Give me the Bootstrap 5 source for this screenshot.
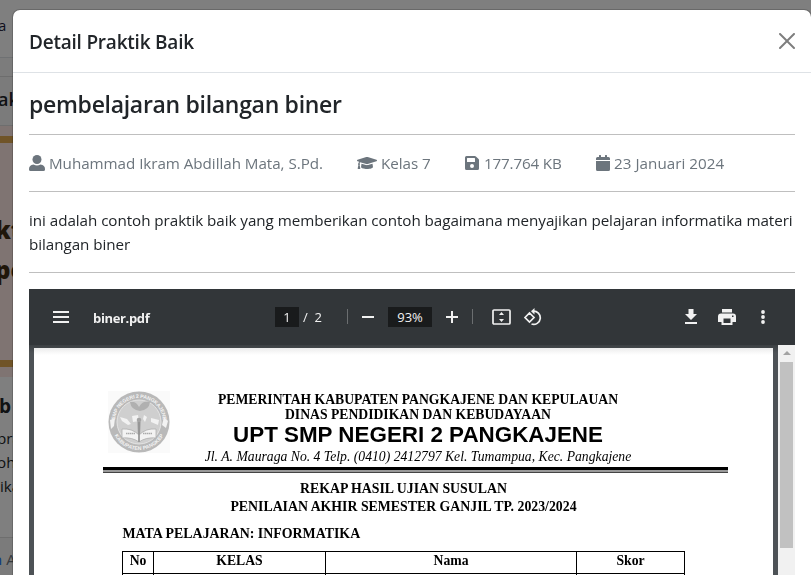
<!DOCTYPE html>
<html lang="id">
<head>
<meta charset="utf-8">
<meta name="viewport" content="width=device-width, initial-scale=1">
<title>Detail Praktik Baik</title>
<link href="https://cdn.jsdelivr.net/npm/bootstrap@5.3.0/dist/css/bootstrap.min.css" rel="stylesheet">
<style>
body{font-family:"Open Sans","Noto Sans",sans-serif;height:575px;overflow:hidden;background:#fff}
/* page behind the modal */
.backpage{height:575px;overflow:hidden;white-space:nowrap}
.backpage .line{display:flex;align-items:center}
.bp-nav{height:58px;background:#fff;border-bottom:1px solid #dee2e6;padding:0 0 7px;color:#1c1c3c;font-size:15px;text-indent:-2px}
.bp-gap{height:18px;background:#f8f8f8}
.bp-head{height:50px;background:#f7f7f7;border-top:1px solid #dadada;border-bottom:1px solid #ddd;font-size:18px;font-weight:600;padding-bottom:4px;text-indent:-2px}
.bp-pic{height:251px;background:#fee9e4;padding-top:10px}
.bp-bar{height:7px;background:#e0a850}
.bp-mid{height:217px;padding-top:67px;color:#402c14;font-weight:800;font-size:24px;line-height:40px;text-indent:-5px}
.bp-mid .line{height:40px}
.bp-body{height:161px;background:#fff;border-bottom:1px solid #ddd;padding-top:17px;font-size:15.2px}
.bp-body .line{height:24px;text-indent:-3px}
.bp-body .bp-title{font-weight:700;font-size:19px;margin-bottom:8px;text-indent:-1px}
.bp-body .line.ik{text-indent:0}
.bp-foot{height:37px;background:#f7f7f7;color:#6c757d;font-size:15px;padding-top:5px}
.bp-foot span{color:#0d6efd;margin-left:-7px;margin-right:4px}
/* modal */
.detail .modal-dialog{max-width:800px;width:800px;margin:9px 0 0 12px}
.detail .modal-content{height:640px}
.modal-title{font-size:19px;font-weight:600;line-height:28px;padding-top:2px;letter-spacing:-.22px}
.doc-name{font-size:23px;font-weight:600;line-height:26.8px;padding-top:2px;letter-spacing:-.3px}
.rule{margin:16px 0;border-top:1px solid #000;opacity:.25}
.btn-close.x-mark{padding:8px;margin:-8px -8px -8px auto}
.meta{height:24px;font-size:15.2px;line-height:24px;color:#6c757d;letter-spacing:-.04px}
.meta svg{fill:#6c757d;flex:none}
.meta .it{display:flex;align-items:center;white-space:nowrap}
.m1{width:328px}.m2{width:108px}.m3{width:131px}
.m2 .t2{letter-spacing:-.05px}.m3 .t3{padding-left:1px;letter-spacing:-.15px}.t4{letter-spacing:.04px}
.desc{font-size:15.2px;line-height:24px;letter-spacing:-.045px;white-space:nowrap}
/* pdf viewer */
.viewer{height:340px;background:#4d5256;overflow:hidden}
.bar{height:56px;background:#323639;color:#f1f1f1;font-size:13px}
.bar svg{fill:#f1f1f1;flex:none}
.fname{font-weight:700;letter-spacing:-.35px;width:182px;padding-top:3px}
.field{background:#191b1c;height:20px;line-height:21px;text-align:center}
.vsep{width:1px;height:15px;background:#6b6e70}
.p1{width:24px}.p2{margin-left:4px;width:44px;padding-top:1px}.p3{width:44px;margin-left:14px;letter-spacing:-.1px}
.i1,.i2,.s2{margin-left:14px}.i3{margin-left:18.5px}.i4{margin-left:13.5px}.i5{margin-left:142px}.i6{margin-left:21px}.i7{margin-left:25px}
.stage{height:284px;background:linear-gradient(#3c4043,#4d5256 8px)}
.sheet{width:739px;margin:3px 5px 0;background:linear-gradient(#ececec,#fff 7px);color:#000;font-family:"Liberation Serif","Times New Roman",serif;white-space:nowrap}
.sbar{width:17px;background:#f1f1f1}
.thumb{width:13px;height:186px;background:#c1c1c1}
.sbtn{height:17px}
.letter{padding:44px 0 0 69px;height:119px}
.emblem{margin-left:4.5px;margin-top:-1px}
.heads{width:440px;margin-left:28.5px;text-align:center;font-weight:700;font-size:13.68px;line-height:15px}
.school{font-family:"Liberation Sans",Arial,sans-serif;font-size:22.4px;line-height:25px;padding-bottom:2px}
.addr{font-weight:400;font-style:italic;font-size:13.7px;line-height:16px}
.thick{width:625px;height:6px;border-top:3px solid #000;border-bottom:1px solid #444;background:#999;margin-left:69px}
.recap{text-align:center;font-weight:700;font-size:13.82px;line-height:18px;padding-top:7px;width:739px}
.subj{font-weight:700;font-size:13.9px;line-height:18px;margin:9px 0 0 88.5px}
.grid{width:563px;margin:8px 0 0 88px;font-weight:700;font-size:13.7px;line-height:18px;text-align:center;border-collapse:collapse}
.grid th{border:1px solid #000;padding:0 0 3px;height:22px}
</style>
<script src="https://cdn.jsdelivr.net/npm/bootstrap@5.3.0/dist/js/bootstrap.bundle.min.js"></script>
</head>
<body>
<div class="backpage">
  <div class="line bp-nav">a</div>
  <div class="bp-gap"></div>
  <div class="line bp-head">ak</div>
  <div class="bp-pic"><div class="bp-bar"></div>
    <div class="bp-mid"><div class="line">kt</div><div class="line">pe</div></div>
    <div class="bp-bar"></div></div>
  <div class="bp-body"><div class="line bp-title">b</div><div class="line">pra</div><div class="line">oh</div><div class="line ik">ika</div></div>
  <div class="line bp-foot"><span>n</span>A</div>
</div>
<div class="modal-backdrop show"></div>
<div class="modal d-block detail overflow-hidden" tabindex="-1">
 <div class="modal-dialog">
  <div class="modal-content">
   <div class="modal-header">
    <h5 class="modal-title">Detail Praktik Baik</h5>
    <button type="button" class="btn-close x-mark" aria-label="Close"></button>
   </div>
   <div class="modal-body">
    <h4 class="doc-name mb-0">pembelajaran bilangan biner</h4>
    <hr class="rule">
    <div class="meta d-flex">
     <div class="it m1"><svg width="16" height="16" viewBox="0 0 16 16"><circle cx="8" cy="4.500" r="4.500"/><path d="M4.500 9.500Q8 11.500 11.500 9.500Q16 10 16 14V14.500Q16 16 14.500 16H1.500Q0 16 0 14.500V14Q0 10 4.500 9.500Z"/></svg><span class="ms-1 t1">Muhammad Ikram Abdillah Mata, S.Pd.</span></div>
     <div class="it m2"><svg width="20" height="16" viewBox="0 0 640 512"><path d="M622 153 343 67c-15-5-31-5-46 0L18 153c-24 7-24 40 0 47l49 15c-11 13-17 30-18 47-10 6-17 16-17 28 0 11 6 20 14 26L20 431c-2 10 5 20 16 20h56c11 0 18-10 16-20L82 316c8-6 14-15 14-26 0-12-6-22-16-27 1-14 8-26 19-34l198 61c8 2 26 7 46 0l279-90c24-7 24-40 0-47zM352 321c-31 9-55 4-64 0l-145-45-14 108c0 35 86 64 191 64s191-29 191-64l-14-108z"/></svg><span class="ms-1 t2">Kelas 7</span></div>
     <div class="it m3"><svg width="14" height="16" viewBox="0 0 448 512"><path fill-rule="evenodd" d="m434 130-84-84a48 48 0 0 0-34-14H48A48 48 0 0 0 0 80v352a48 48 0 0 0 48 48h352a48 48 0 0 0 48-48V164a48 48 0 0 0-14-34zM224 416a64 64 0 1 1 0-128 64 64 0 0 1 0 128zm96-305v101a12 12 0 0 1-12 12H76a12 12 0 0 1-12-12V108a12 12 0 0 1 12-12h229z"/></svg><span class="ms-1 t3">177.764 KB</span></div>
     <div class="it"><svg width="14" height="16" viewBox="0 0 14 16"><path d="M0 6H14V14.500Q14 16 12.500 16H1.500Q0 16 0 14.500ZM0 5V3.500Q0 2 1.500 2H3V.4Q3 0 3.400 0H4.600Q5 0 5 .4V2H9V.4Q9 0 9.400 0H10.600Q11 0 11 .4V2H12.500Q14 2 14 3.500V5Z"/></svg><span class="ms-1 t4">23 Januari 2024</span></div>
    </div>
    <hr class="rule">
    <div class="desc">ini adalah contoh praktik baik yang memberikan contoh bagaimana menyajikan pelajaran informatika materi<br>bilangan biner</div>
    <hr class="rule">
    <div class="viewer">
     <div class="bar d-flex align-items-center">
      <svg class="ms-4" width="16" height="12" viewBox="0 0 16 12"><path d="M0 0h16v2H0zM0 5h16v2H0zM0 10h16v2H0z"/></svg>
      <span class="fname ms-4">biner.pdf</span>
      <span class="field p1">1</span><span class="p2">/&nbsp; 2</span>
      <span class="vsep"></span>
      <svg class="i1" width="12" height="12" viewBox="0 0 12 12"><path d="M0 5h12v2H0z"/></svg>
      <span class="field p3">93%</span>
      <svg class="i2" width="12" height="12" viewBox="0 0 12 12"><path d="M0 5h5V0h2v5h5v2H7v5H5V7H0z"/></svg>
      <span class="vsep s2"></span>
      <svg class="i3" width="19" height="16" viewBox="0 0 19 16"><rect x="1" y="1" width="17" height="14" rx="1" fill="none" stroke="#f1f1f1" stroke-width="1.700"/><path d="M9.500 3 12 6H7zM9.500 13 7 10h5z"/></svg>
      <svg class="i4" width="19" height="18" viewBox="0 0 19 18"><path d="M1 9.500 5.500 5 10 9.500 5.500 14z M9 3.200A6.600 6.600 0 1 1 7.500 16" fill="none" stroke="#f1f1f1" stroke-width="1.700"/><path d="M10.500 0v6.500L7 3.200z"/></svg>
      <svg class="i5" width="12" height="15" viewBox="0 0 12 15"><path d="M3.500 0h5v5H12l-6 6-6-6h3.500zM0 13h12v2H0z"/></svg>
      <svg class="i6" width="18" height="16" viewBox="0 0 18 16"><path fill-rule="evenodd" d="M4 0h10v3.500H4zM3 4.500h12a3 3 0 0 1 3 3V13h-3.500v3h-11v-3H0V7.500a3 3 0 0 1 3-3zM5.500 9.500V14h7V9.500zM14 6.500V8h1.500V6.500z"/></svg>
      <svg class="i7" width="4" height="14" viewBox="0 0 4 14"><circle cx="2" cy="2" r="1.900"/><circle cx="2" cy="7" r="1.900"/><circle cx="2" cy="12" r="1.900"/></svg>
     </div>
     <div class="stage d-flex">
      <div class="sheet">
       <div class="letter d-flex">
        <svg class="emblem" width="62" height="62" viewBox="0 0 62 62"><rect width="62" height="62" fill="#fafafa"/><circle cx="31" cy="31" r="30.500" fill="#b9b9b9"/><circle cx="31" cy="31" r="22" fill="#cfcfcf" stroke="#e4e4e4"/>
         <path id="ringTop" d="M7 31a24 24 0 0 1 48 0" fill="none"/><path id="ringLow" d="M3 31a28 28 0 0 0 56 0" fill="none"/>
         <g font-family="Liberation Sans, sans-serif" font-weight="700" font-size="5.200" fill="#f4f4f4"><text><textPath href="#ringTop" startOffset="2" textLength="71">SMP NEGERI 2 PANGKAJENE</textPath></text><text><textPath href="#ringLow" startOffset="14" textLength="60">KABUPATEN PANGKEP</textPath></text></g>
         <path d="M22 11q6-1 9 5 4-7 11-5-1 8-10 9-9-1-10-9z" fill="#b0b0b0"/><path d="M12 26l7 2 4 5-3 1-6-4zM24 25l6-1 1 6-6 1zM36 24l3 2-2 5-2-3zM43 27l8 2-1 5-7-3zM2 29l5-2-1 8-3 3zM56 26l4 4-2 7-4-3z" fill="#f2f2f2"/>
         <path d="M29.500 31h3L32 46h-2z" fill="#969696"/><circle cx="31" cy="29" r="2.300" fill="#a5a5a5"/>
         <path d="M14 38q10-1 17 6 7-7 17-6v9q-10-1-17 4-7-5-17-4z" fill="#f3f3f3" stroke="#b0b0b0" stroke-width=".8"/><path d="M31 34v17" stroke="#979797" stroke-width="1.800"/><path d="M18 42.500h9M35 42.500h9" stroke="#aaa" stroke-width="1.600" stroke-dasharray="1.500 .5"/></svg>
        <div class="heads"><div>PEMERINTAH KABUPATEN PANGKAJENE DAN KEPULAUAN</div><div>DINAS PENDIDIKAN DAN KEBUDAYAAN</div><div class="school">UPT SMP NEGERI 2 PANGKAJENE</div><div class="addr">Jl. A. Mauraga No. 4 Telp. (0410) 2412797 Kel. Tumampua, Kec. Pangkajene</div></div>
       </div>
       <div class="thick"></div>
       <div class="recap">REKAP HASIL UJIAN SUSULAN<br>PENILAIAN AKHIR SEMESTER GANJIL TP. 2023/2024</div>
       <div class="subj">MATA PELAJARAN: INFORMATIKA</div>
       <table class="grid"><tr><th style="width:31px">No</th><th style="width:172px">KELAS</th><th style="width:251px">Nama</th><th>Skor</th></tr><tr><th></th><th></th><th></th><th></th></tr></table>
      </div>
      <div class="sbar d-flex flex-column align-items-center"><div class="sbtn d-flex align-items-center"><svg width="8" height="4" viewBox="0 0 8 4"><path d="M0 4 4 0l4 4z" fill="#a3a3a3"/></svg></div><div class="thumb"></div></div>
     </div>
    </div>
   </div>
  </div>
 </div>
</div>
</body>
</html>
